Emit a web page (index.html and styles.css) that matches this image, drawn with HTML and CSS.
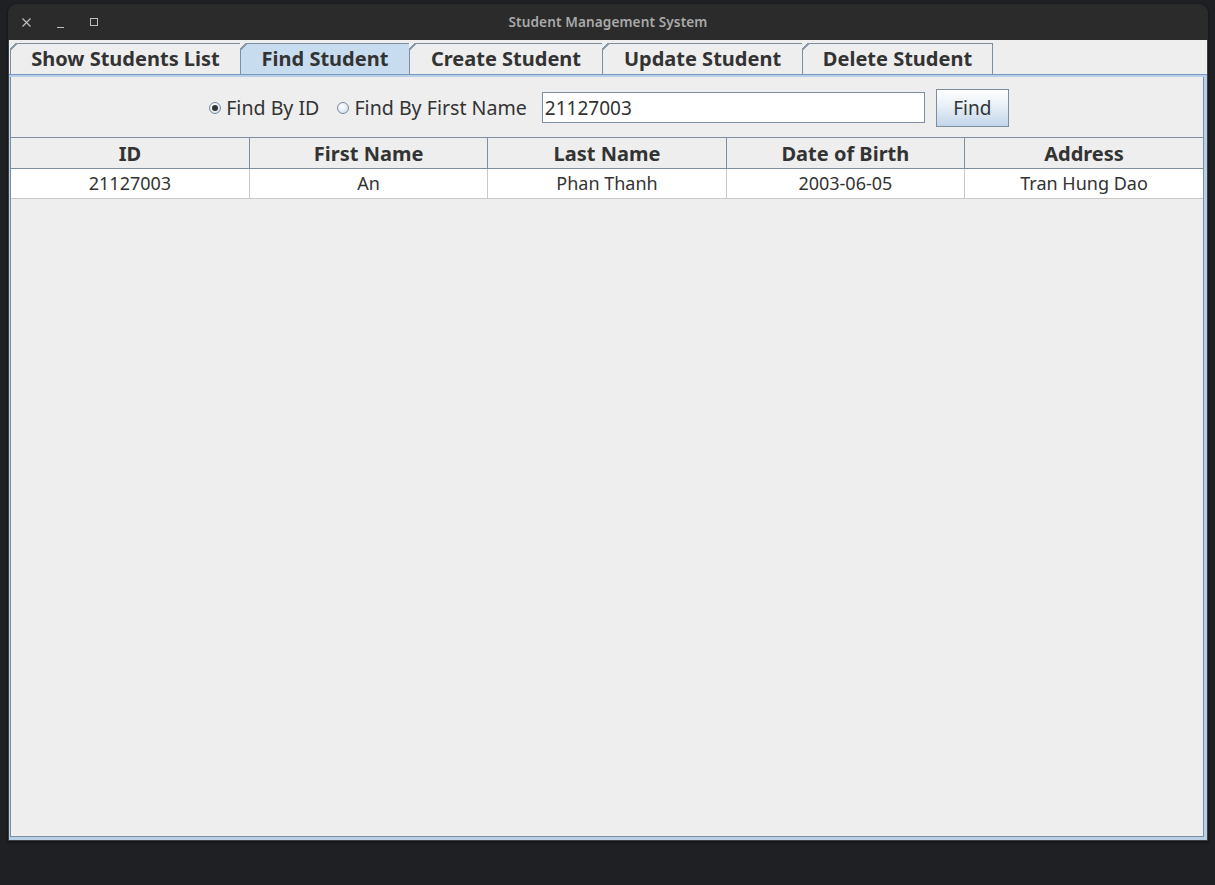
FILE: index.html
```html
<!DOCTYPE html>
<html lang="en">
<head>
<meta charset="utf-8">
<title>Student Management System</title>
<link rel="stylesheet" href="styles.css">
</head>
<body>
<div class="window">
  <div class="titlebar">
    <div class="wm-buttons">
      <svg class="wm-icon" width="9" height="9" viewBox="0 0 9 9"><path d="M0.5 0.5 L8.5 8.5 M8.5 0.5 L0.5 8.5" stroke="#bdbdbd" stroke-width="1.2" fill="none"/></svg>
      <svg class="wm-icon wm-min" width="7" height="9" viewBox="0 0 7 9"><path d="M0 8.5 H7" stroke="#bdbdbd" stroke-width="1" fill="none"/></svg>
      <svg class="wm-icon" width="8" height="8" viewBox="0 0 8 8"><rect x="0.5" y="0.5" width="7" height="7" stroke="#bdbdbd" stroke-width="1" fill="none"/></svg>
    </div>
    <div class="title">Student Management System</div>
    <div></div>
  </div>
  <div class="client">
    <div class="tabs">
      <div class="tab">Show Students List</div>
      <div class="tab selected">Find Student</div>
      <div class="tab">Create Student</div>
      <div class="tab">Update Student</div>
      <div class="tab">Delete Student</div>
    </div>
    <div class="panel">
      <div class="panel-inner">
        <div class="search-row">
          <label class="radio-item"><span class="radio checked"></span>Find By ID</label>
          <label class="radio-item"><span class="radio"></span>Find By First Name</label>
          <div class="field">21127003</div>
          <button class="find-btn">Find</button>
        </div>
        <table class="grid">
          <thead>
            <tr><th>ID</th><th>First Name</th><th>Last Name</th><th>Date of Birth</th><th>Address</th></tr>
          </thead>
          <tbody>
            <tr><td>21127003</td><td>An</td><td>Phan Thanh</td><td>2003-06-05</td><td>Tran Hung Dao</td></tr>
          </tbody>
        </table>
      </div>
    </div>
  </div>
</div>
</body>
</html>
```
FILE: styles.css
```css
* { box-sizing: border-box; }
html, body {
  margin: 0;
  padding: 0;
  background: #1f2023;
  width: 1215px;
  height: 885px;
  overflow: hidden;
  font-family: "Noto Sans", "DejaVu Sans", sans-serif;
}
.window {
  margin: 4px 0 0 8px;
  width: 1200px;
  height: 837px;
  display: flex;
  flex-direction: column;
  border-radius: 9px 9px 0 0;
  overflow: hidden;
  box-shadow: 0 1px 3px rgba(0,0,0,0.6);
}
.titlebar {
  height: 36px;
  flex: 0 0 36px;
  background: #2b2b2b;
  display: grid;
  grid-template-columns: 1fr auto 1fr;
  align-items: center;
}
.wm-buttons {
  display: flex;
  align-items: center;
  gap: 26px;
  padding-left: 14px;
}
.wm-icon { display: block; }
.wm-min { margin-top: 3px; }
.title {
  color: #a9a9a9;
  font-size: 13.6px;
  font-weight: 600;
  letter-spacing: 0.1px;
  padding-bottom: 2px;
}
.client {
  flex: 1;
  background: #eeeeee;
  border: 1px solid #3a4048;
  border-top: none;
  display: flex;
  flex-direction: column;
}
.tabs {
  display: flex;
  padding: 3px 0 0 1px;
  height: 34px;
  flex: 0 0 34px;
}
.tab {
  position: relative;
  height: 31px;
  border: 1px solid #7d8ea0;
  border-bottom: none;
  margin-right: -1px;
  padding: 0 10px;
  font-size: 20px;
  font-weight: 700;
  color: #333333;
  display: flex;
  align-items: center;
  justify-content: center;
  background: #eeeeee;
  line-height: 1;
}
.tab::before {
  content: "";
  position: absolute;
  left: -1px;
  top: -1px;
  width: 7px;
  height: 7px;
  background: linear-gradient(135deg, #eeeeee 0, #eeeeee 42%, #8a9aab 42%, #8a9aab 58%, transparent 58%);
}
.tab:nth-child(1) { width: 231px; }
.tab:nth-child(2) { width: 170px; }
.tab:nth-child(3) { width: 194px; }
.tab:nth-child(4) { width: 201px; }
.tab:nth-child(5) { width: 191px; }
.tab.selected {
  background: #c8dcf0;
}
.panel {
  flex: 1;
  display: flex;
  border-style: solid;
  border-color: #b9cfe6;
  border-width: 3px 3px 3px 1px;
  position: relative;
}
.panel::before {
  content: "";
  position: absolute;
  left: -1px;
  right: -3px;
  top: -3px;
  height: 1px;
  background: #7a99bf;
}
.panel-inner {
  flex: 1;
  border: 1px solid #7d8ea0;
  border-top: none;
  display: flex;
  flex-direction: column;
  background: #eeeeee;
}
.search-row {
  height: 60px;
  flex: 0 0 60px;
  display: flex;
  align-items: center;
  justify-content: center;
  padding-left: 4px;
  padding-top: 1px;
  color: #333333;
  font-size: 19.6px;
}
.radio-item {
  display: flex;
  align-items: center;
  gap: 5px;
  margin-right: 18px;
}
.radio-item:nth-child(2) { margin-right: 15px; }
.radio {
  width: 12px;
  height: 12px;
  border-radius: 50%;
  border: 1px solid #7b8a9a;
  background: radial-gradient(circle at 40% 35%, #ffffff 0, #e6eef7 50%, #c3d3e6 100%);
  position: relative;
}
.radio.checked::after {
  content: "";
  position: absolute;
  left: 2px;
  top: 2px;
  width: 6px;
  height: 6px;
  border-radius: 50%;
  background: #333333;
}
.field {
  width: 383px;
  height: 31px;
  border: 1px solid #7d8ea0;
  box-shadow: inset 1px 1px 0 #ffffff;
  background: #ffffff;
  padding-left: 2px;
  display: flex;
  align-items: center;
  font-size: 19px;
  color: #333333;
  margin-right: 11px;
}
.find-btn {
  width: 73px;
  height: 38px;
  border: 1px solid #7d8ea0;
  background: linear-gradient(#ffffff 0%, #eaf1f8 40%, #c3d5e9 100%);
  font-family: inherit;
  font-size: 19px;
  color: #333333;
  padding: 0;
}
.grid {
  width: 100%;
  border-collapse: collapse;
  table-layout: fixed;
  color: #333333;
  font-size: 18px;
}
.grid th {
  height: 31px;
  background: #eeeeee;
  font-size: 20px;
  font-weight: 700;
  border-top: 1px solid #7d8ea0;
  border-bottom: 1px solid #7d8ea0;
  border-left: 1px solid #7d8ea0;
  padding: 1px 0 0 0;
  line-height: 1;
}
.grid th:first-child { border-left: none; }
.grid td {
  height: 30px;
  background: #ffffff;
  text-align: center;
  border-bottom: 1px solid #c9c9c9;
  border-left: 1px solid #c9c9c9;
  padding: 0 0 1px 0;
  line-height: 1;
}
.grid td:first-child { border-left: none; }
```
